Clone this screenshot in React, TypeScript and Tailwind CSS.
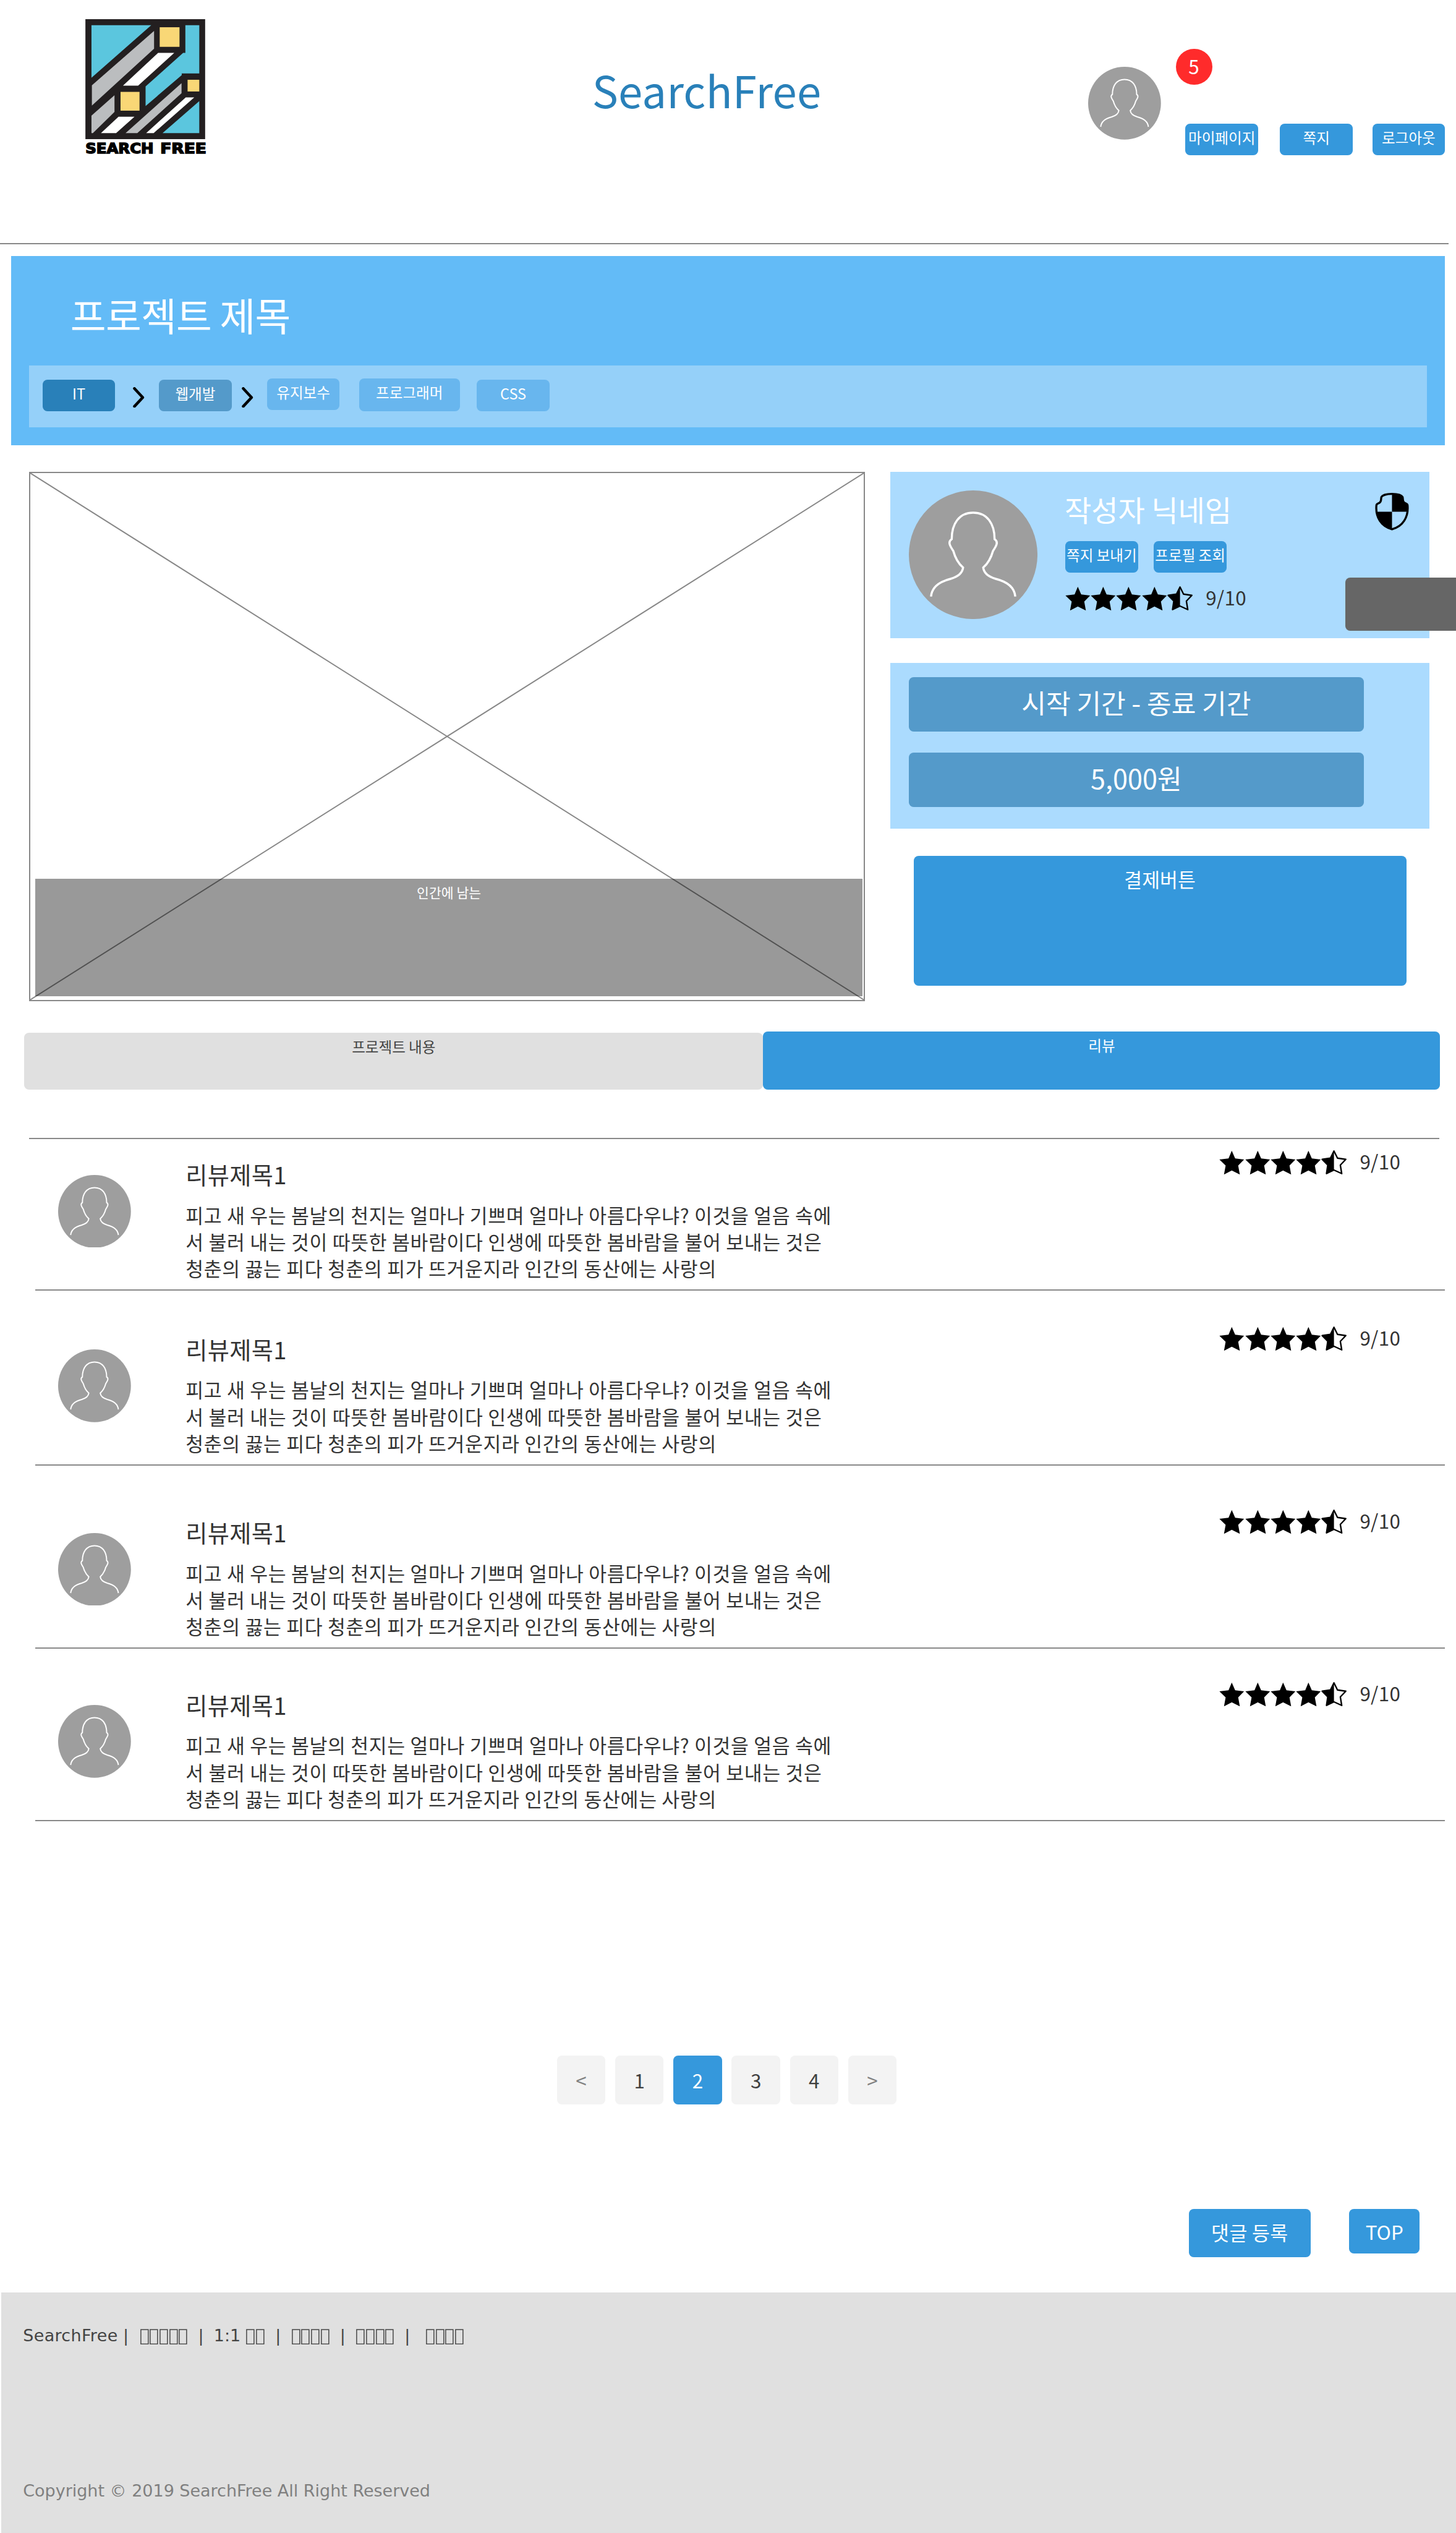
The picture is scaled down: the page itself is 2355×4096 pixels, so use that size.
import type { ReactNode } from "react";

const BODY_LINES = [
  "피고 새 우는 봄날의 천지는 얼마나 기쁘며 얼마나 아름다우냐? 이것을 얼음 속에",
  "서 불러 내는 것이 따뜻한 봄바람이다 인생에 따뜻한 봄바람을 불어 보내는 것은",
  "청춘의 끓는 피다 청춘의 피가 뜨거운지라 인간의 동산에는 사랑의",
];

const REVIEWS = [
  { height: "h-[250px]", starOffset: "" },
  { height: "h-[288px]", starOffset: "mt-[2px]" },
  { height: "h-[302px]", starOffset: "mt-[2px]" },
  { height: "h-[284px]", starOffset: "mt-[2px]" },
];

const STAR =
  "M20.7 .7 L26.3 13.6 L41 15.4 L31.3 25.3 L34 40 L20.7 33.4 L7.9 40 L10.6 25.3 L.3 15.4 L15.4 13.6 Z";

function Logo() {
  return (
    <svg viewBox="123 97 597 667" className="ml-[141px] mt-[32px] h-[222px] w-[199px] shrink-0 overflow-visible">
      <rect x="123" y="97" width="593" height="594" fill="#231f20" />
      <g fill="#5bc6de">
        <path d="M153 127H449L153 387Z" />
        <path d="M618 127H687V366H600V374L421 527V430L607 264H618Z" />
        <path d="M687 503V661H505Z" />
      </g>
      <g fill="#bbbdbf">
        <path d="M463 155V243L155 525V425Z" />
        <path d="M599 414V464L380 661H322Z" />
        <path d="M267 474V556L160 661H153V575Z" />
      </g>
      <g fill="#fff">
        <path d="M483 264H563L384 426H309Z" />
        <path d="M620 484H662L461 661H424Z" />
        <path d="M287 580H366L275 661H200Z" />
      </g>
      <g fill="#f9d776">
        <rect x="491" y="137" width="98" height="97" />
        <rect x="629" y="397" width="58" height="58" />
        <rect x="297" y="457" width="94" height="93" />
      </g>
      <g fontFamily="'DejaVu Sans', sans-serif" fontWeight="700" fontSize="72" stroke="#000" strokeWidth="5">
        <text x="123" y="760.5" textLength="338" lengthAdjust="spacingAndGlyphs">
          SEARCH
        </text>
        <text x="494" y="760.5" textLength="228" lengthAdjust="spacingAndGlyphs">
          FREE
        </text>
      </g>
    </svg>
  );
}

function Avatar({ className }: { className: string }) {
  return (
    <svg viewBox="0 0 120 120" className={className}>
      <circle cx="60" cy="60" r="60" fill="#9e9e9e" />
      <path
        d="M20.7 99 C21.5 90 29 85 39 82.5 C46 80.5 50 77 50.6 72 C46 68 43 62 41.5 56.5 C38.5 52 36 48 40 45.5 C40 31 47 20.8 60 20.8 C73 20.8 80 31 80 45.5 C84 48 81.5 52 78.5 56.5 C77 62 74 68 69.4 72 C70 77 74 80.5 81 82.5 C91 85 98.5 90 99.3 99"
        fill="none"
        stroke="#fff"
        strokeWidth="2"
      />
    </svg>
  );
}

function Rating({ className = "" }: { className?: string }) {
  return (
    <div className={`flex items-start ${className}`}>
      {[0, 1, 2, 3].map((i) => (
        <svg key={i} viewBox="0 0 42 40" className="h-[40px] w-[42px]">
          <path d={STAR} />
        </svg>
      ))}
      <svg viewBox="0 0 42 40" className="h-[40px] w-[42px]">
        <path
          d="M21 1.3 L26.8 13 L40.5 15 L31.5 24.5 L33.8 38.5 L21 32.6 L8.7 38.5 L10.8 24.5 L1.5 15 L15.2 13 Z"
          fill="none"
          stroke="#000"
          strokeWidth="2.4"
          strokeLinejoin="round"
        />
        <path d="M21 1 L15.2 13 L1.5 15 L10.8 24.5 L8.7 38.5 L21 32.6 Z" />
      </svg>
      <span className="ml-[21.5px] text-[32px] leading-[37px] tracking-[0.3px] text-[#333]">9/10</span>
    </div>
  );
}

function Shield() {
  return (
    <svg viewBox="0 0 56 62" className="mr-[33px] mt-[34px] ml-auto h-[62px] w-[56px]">
      <path
        d="M28 1.7 C37 1.7 44 4 45.5 7 C46.5 9.5 44.8 14.5 49 16.5 C51 17.5 53.5 18 53.7 20.5 C55.5 40 46 55 28 60 C10 55 .5 40 2.3 20.5 C2.5 18 5 17.5 7 16.5 C11.2 14.5 9.5 9.5 10.5 7 C12 4 19 1.7 28 1.7 Z"
        fill="none"
        stroke="#000"
        strokeWidth="3.4"
      />
      <path d="M28 1.7 C37 1.7 44 4 45.5 7 C46.5 9.5 44.8 14.5 49 16.5 C51 17.5 53.5 18 53.7 20.5 L53.9 31 H28 Z" />
      <path d="M28 31 H2.2 C4 46 13 56 28 60 Z" />
    </svg>
  );
}

function Chevron({ className }: { className: string }) {
  return (
    <svg viewBox="0 0 19 34" className={`h-[34px] w-[19px] shrink-0 ${className}`}>
      <path d="M2.5 2.3 L16.2 17 L2.5 31.7" fill="none" stroke="#000" strokeWidth="4.6" strokeLinecap="round" strokeLinejoin="round" />
    </svg>
  );
}

function Tag({ className, children }: { className: string; children: ReactNode }) {
  return (
    <div
      className={`shrink-0 rounded-[8px] text-center text-[24px] leading-[45px] whitespace-nowrap text-white ${className}`}
    >
      {children}
    </div>
  );
}

/* Placeholder glyph boxes used by the footer menu. */
function Boxes({ n }: { n: number }) {
  return (
    <>
      {Array.from({ length: n }, (_, i) => (
        <svg key={i} viewBox="0 0 16 26" className="inline-block h-[26px] w-[16px] align-[-5px]">
          <rect x="1.9" y="1.1" width="12.2" height="23.8" fill="none" stroke="#444" strokeWidth="1.5" />
        </svg>
      ))}
    </>
  );
}

function Review({ height, starOffset }: { height: string; starOffset: string }) {
  return (
    <article className={`flex flex-col ${height}`}>
      <div className="mt-auto flex h-[229px] items-start">
        <Avatar className="mt-[40px] ml-[96px] h-[120px] w-[120px] shrink-0" />
        <div className="mt-[11px] ml-[90px] w-[1704px] whitespace-nowrap text-[#333]">
          <h3 className="text-[39px] leading-[58px] tracking-[0.3px]">리뷰제목1</h3>
          <p className="mt-[15px] text-[32px] leading-[44px] tracking-[0.66px]">
            {BODY_LINES.map((line) => (
              <span key={line} className="block">
                {line}
              </span>
            ))}
          </p>
        </div>
        <Rating className={starOffset} />
      </div>
      <div className="ml-[58px] w-[2324px] shrink-0 border-t-[2.1px] border-[#888]" />
    </article>
  );
}

export default function App() {
  return (
    <div className="relative h-[4174px] w-[2400px] overflow-hidden bg-white font-['Noto_Sans_CJK_KR',sans-serif] [zoom:0.98125]">
      <header className="flex h-[401px] items-start">
        <Logo />
        <h1 className="mt-[95px] ml-[636px] w-[818px] text-[72px] leading-[104px] tracking-[0.3px] text-[#2980b9]">
          SearchFree
        </h1>
        <Avatar className="mt-[110px] h-[120px] w-[120px] shrink-0" />
        <div className="ml-[24px]">
          <div className="mt-[80px] h-[60px] w-[60px] rounded-full bg-[#ff2b2b] text-center text-[32px] leading-[57px] text-white">
            5
          </div>
          <nav className="mt-[64px] ml-[16px] flex">
            <Tag className="h-[52px] w-[120px] bg-[#3598dc]">마이페이지</Tag>
            <Tag className="ml-[36px] h-[52px] w-[120px] bg-[#3598dc]">쪽지</Tag>
            <Tag className="ml-[32px] h-[52px] w-[120px] bg-[#3598dc]">로그아웃</Tag>
          </nav>
        </div>
      </header>
      <div className="w-[2388px] border-t-[2.1px] border-[#888]" />

      <section className="mt-[19px] ml-[18px] h-[312px] w-[2364px] bg-[#63bbf7]">
        <h2 className="pt-[50px] pl-[98px] text-[64px] leading-[92px] tracking-[-0.7px] text-white">프로젝트 제목</h2>
        <div className="mt-[38px] ml-[30px] flex h-[102px] w-[2304px] items-start bg-[#95d0f9]">
          <Tag className="mt-[24px] ml-[22px] h-[52px] w-[120px] bg-[#2980b9]">IT</Tag>
          <Chevron className="mt-[36px] ml-[29px]" />
          <Tag className="mt-[24px] ml-[24px] h-[52px] w-[120px] bg-[#549aca]">웹개발</Tag>
          <Chevron className="mt-[36px] ml-[17px]" />
          <Tag className="mt-[22px] ml-[22px] h-[52px] w-[120px] bg-[#68b6ee]">유지보수</Tag>
          <Tag className="mt-[22px] ml-[32px] h-[54px] w-[166px] bg-[#68b6ee]">프로그래머</Tag>
          <Tag className="mt-[24px] ml-[28px] h-[52px] w-[120px] bg-[#68b6ee]">CSS</Tag>
        </div>
      </section>

      <main>
        <div className="mt-[44px] flex h-[872px] items-start">
          <div className="relative ml-[48px] h-[872px] w-[1378px] shrink-0 border-[2.1px] border-[#888]">
            <svg viewBox="0 0 1374 868" preserveAspectRatio="none" className="h-full w-full">
              <path d="M0 0L1374 868M1374 0L0 868" stroke="#888" strokeWidth="2" fill="none" />
            </svg>
            <div className="absolute top-[668px] left-[8px] h-[194px] w-[1364px] bg-black/40 text-center text-[22px] leading-[44px] text-white">
              인간에 남는
            </div>
          </div>

          <aside className="ml-[42px] w-[888px] shrink-0">
            <div className="flex h-[274px] items-start bg-[#abdbfe]">
              <Avatar className="mt-[30px] ml-[30px] h-[212px] w-[212px] shrink-0" />
              <div className="mt-[26px] ml-[46px]">
                <h3 className="-ml-px text-[48px] leading-[70px] tracking-[-0.1px] whitespace-nowrap text-white">
                  작성자 닉네임
                </h3>
                <div className="mt-[18px] flex">
                  <Tag className="h-[52px] w-[120px] bg-[#3598dc]">쪽지 보내기</Tag>
                  <Tag className="ml-[26px] h-[52px] w-[120px] bg-[#3598dc]">프로필 조회</Tag>
                </div>
                <Rating className="mt-[22px]" />
              </div>
              <Shield />
            </div>
            <div className="mt-[40px] h-[274px] bg-[#abdbfe] pt-[24px] pl-[30px]">
              <div className="h-[90px] w-[750px] rounded-[8px] bg-[#549aca] text-center text-[44px] leading-[83px] text-white">
                시작 기간 - 종료 기간
              </div>
              <div className="mt-[34px] h-[90px] w-[750px] rounded-[8px] bg-[#549aca] text-center text-[44px] leading-[83px] text-white">
                5,000원
              </div>
            </div>
            <div className="mt-[44px] ml-[38px] h-[214px] w-[812px] rounded-[8px] bg-[#3598dc] text-center text-[32px] leading-[78px] text-white">
              결제버튼
            </div>
          </aside>
        </div>

        <div className="mt-[50px] flex h-[96px] items-start text-center text-[24px] leading-[45px]">
          <div className="mt-[2px] ml-[40px] h-[94px] w-[1218px] shrink-0 rounded-[8px] bg-[#e0e0e0] text-[#444]">
            프로젝트 내용
          </div>
          <div className="h-[96px] w-[1116px] shrink-0 rounded-[8px] bg-[#3598dc] text-white">리뷰</div>
        </div>

        <div className="mt-[79px] ml-[48px] w-[2324px] border-t-[2.1px] border-[#888]" />
        {REVIEWS.map((review, i) => (
          <Review key={i} {...review} />
        ))}

        <nav className="mt-[387px] ml-[918px] flex gap-[16px] text-center text-[32px] leading-[82px]">
          <span className="h-[80px] w-[80px] rounded-[8px] bg-[#f3f3f3] text-[#808080]">&lt;</span>
          <span className="h-[80px] w-[80px] rounded-[8px] bg-[#f3f3f3] text-[#404040]">1</span>
          <span className="h-[80px] w-[80px] rounded-[8px] bg-[#3598dc] text-white">2</span>
          <span className="h-[80px] w-[80px] rounded-[8px] bg-[#f3f3f3] text-[#404040]">3</span>
          <span className="h-[80px] w-[80px] rounded-[8px] bg-[#f3f3f3] text-[#404040]">4</span>
          <span className="h-[80px] w-[80px] rounded-[8px] bg-[#f3f3f3] text-[#808080]">&gt;</span>
        </nav>

        <div className="mt-[172px] ml-[1960px] flex items-start text-center text-[32px] text-white">
          <div className="h-[80px] w-[200px] rounded-[8px] bg-[#3598dc] leading-[78px] tracking-[0.4px]">댓글 등록</div>
          <div className="ml-[64px] h-[74px] w-[116px] rounded-[8px] bg-[#3598dc] leading-[76px]">TOP</div>
        </div>
      </main>

      <footer className="mt-[58px] ml-[2px] h-[396px] bg-[#e0e0e0] pt-[51px] pl-[36px] font-['DejaVu_Sans',sans-serif] text-[27.5px] leading-[40px] whitespace-pre text-[#444]">
        <p className="[word-spacing:-0.4px]">
          <span className="tracking-[0.35px]">{"SearchFree |  "}</span>
          <Boxes n={5} />
          {"  |  1:1 "}
          <Boxes n={2} />
          {"  |  "}
          <Boxes n={4} />
          {"  |  "}
          <Boxes n={4} />
          {"  |   "}
          <Boxes n={4} />
        </p>
        <p className="mt-[216px] text-[#808080]">Copyright © 2019 SearchFree All Right Reserved</p>
      </footer>

      <div className="absolute top-[952px] right-0 h-[88px] w-[182px] rounded-l-[8px] bg-[#666]" />
    </div>
  );
}
